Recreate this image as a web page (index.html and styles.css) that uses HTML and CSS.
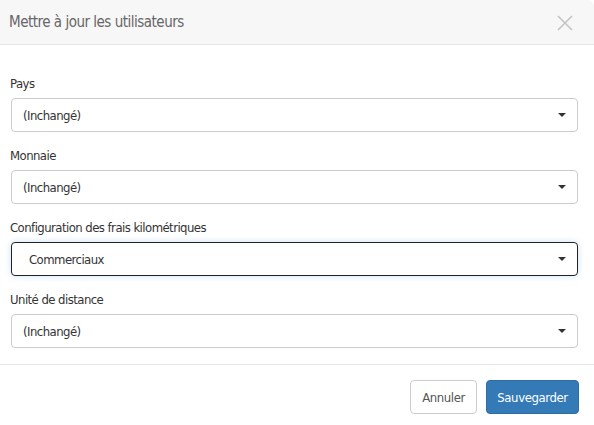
FILE: index.html
```html
<!DOCTYPE html>
<html lang="fr">
<head>
<meta charset="utf-8">
<link rel="stylesheet" href="styles.css">
</head>
<body>
<div class="modal">
  <div class="modal-header">
    <h4 class="title">Mettre à jour les utilisateurs</h4>
    <button class="close" aria-label="Fermer">
      <svg width="16" height="16" viewBox="0 0 16 16"><path d="M1 1L15 15M15 1L1 15" stroke="#c4c4c4" stroke-width="1.6" fill="none"/></svg>
    </button>
  </div>
  <div class="modal-body">
    <div class="group">
      <label class="label">Pays</label>
      <div class="select"><span>(Inchangé)</span><i class="caret"></i></div>
    </div>
    <div class="group">
      <label class="label">Monnaie</label>
      <div class="select"><span>(Inchangé)</span><i class="caret"></i></div>
    </div>
    <div class="group">
      <label class="label">Configuration des frais kilométriques</label>
      <div class="select focused"><span>Commerciaux</span><i class="caret"></i></div>
    </div>
    <div class="group">
      <label class="label">Unité de distance</label>
      <div class="select"><span>(Inchangé)</span><i class="caret"></i></div>
    </div>
  </div>
  <div class="modal-footer">
    <button class="btn btn-default">Annuler</button>
    <button class="btn btn-primary">Sauvegarder</button>
  </div>
</div>
</body>
</html>
```
FILE: styles.css
```css
html, body {
  margin: 0;
  padding: 0;
  background: #ffffff;
}
body {
  font-family: "DejaVu Sans Condensed", "DejaVu Sans", sans-serif;
  font-stretch: condensed;
  color: #333333;
  font-size: 13px;
  letter-spacing: -0.55px;
}
.modal {
  width: 594px;
  height: 425px;
  background: #ffffff;
  border-top-right-radius: 6px;
  overflow: hidden;
}
.modal-header {
  height: 44px;
  background: #f7f7f7;
  border-bottom: 1px solid #e5e5e5;
  display: flex;
  align-items: center;
  justify-content: space-between;
  padding: 0 21px 0 9px;
}
.title {
  margin: 0;
  font-size: 15px;
  font-weight: normal;
  color: #666666;
  letter-spacing: -0.5px;
}
.close {
  border: 0;
  background: none;
  padding: 0;
  display: flex;
  margin-top: 1px;
}
.modal-body {
  padding: 29px 16px 16px 11px;
  display: flex;
  flex-direction: column;
  gap: 14px;
}
.group {
  display: flex;
  flex-direction: column;
}
.label {
  line-height: 20px;
  margin: 0 0 4px -1px;
  color: #333333;
}
.select {
  height: 32px;
  border: 1px solid #cccccc;
  border-radius: 4px;
  display: flex;
  align-items: center;
  justify-content: space-between;
  padding: 0 11px 0 11px;
  color: #333333;
  background: #ffffff;
}
.select.focused {
  border-color: #222222;
  padding-left: 17px;
  box-shadow: 0 0 6px rgba(102, 175, 233, 0.35);
}
.caret {
  width: 0;
  height: 0;
  border-left: 4px solid transparent;
  border-right: 4px solid transparent;
  border-top: 4px solid #333333;
}
.modal-footer {
  border-top: 1px solid #e5e5e5;
  display: flex;
  justify-content: flex-end;
  gap: 9px;
  padding: 15px 15px 0 0;
}
.btn {
  font-family: inherit;
  font-size: 13px;
  letter-spacing: -0.4px;
  height: 34px;
  border-radius: 4px;
  padding: 0;
  cursor: pointer;
}
.btn-default {
  width: 67px;
  background: #ffffff;
  border: 1px solid #cccccc;
  color: #555555;
}
.btn-primary {
  width: 93px;
  background: #337ab7;
  border: 1px solid #2e6da4;
  color: #ffffff;
}
```
